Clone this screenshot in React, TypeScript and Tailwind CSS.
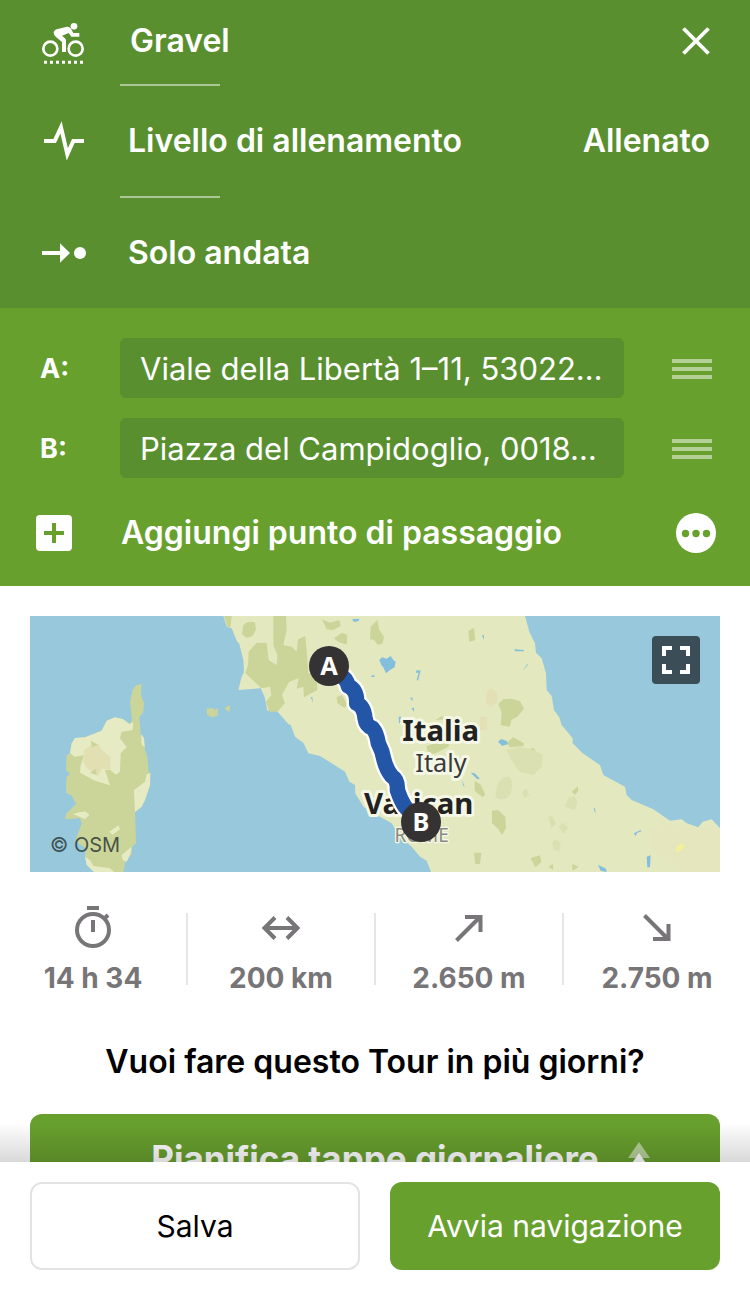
import type { ReactNode } from "react";

const waypoints = [
  { id: "A", value: "Viale della Libertà 1–11, 53022…" },
  { id: "B", value: "Piazza del Campidoglio, 0018…" },
];

function GravelIcon() {
  return (
    <svg viewBox="126 66 126 126" className="h-[42px] w-[42px]" fill="none" stroke="currentColor">
      <circle cx="151" cy="146" r="21" strokeWidth="8" />
      <circle cx="227" cy="146" r="21" strokeWidth="8" />
      <circle cx="222" cy="79" r="10" fill="currentColor" stroke="none" />
      <path
        d="M161 98 Q161 90 173 87 L201 80 Q209 79 213 86 L220 99 H238 V110 H214 L206 99 L186 107 L195 115 Q198 118 198 123 V156 H186 V126 L168 111 Q161 105 161 98 Z"
        fill="currentColor"
        stroke="none"
      />
      <path d="M132 187 H250" strokeWidth="9" strokeDasharray="9 9" />
    </svg>
  );
}

function PulseIcon() {
  return (
    <svg viewBox="132 358 120 126" className="h-[42px] w-10" fill="none" stroke="currentColor">
      <path d="M132 421 H164 L183 380 L202 461 L220 421 H252" strokeWidth="12" strokeMiterlimit="10" />
    </svg>
  );
}

function OneWayIcon() {
  return (
    <svg viewBox="126 727 132 60" className="h-5 w-11" fill="currentColor">
      <path d="M126 751 H180 V728 L210 757 L180 786 V763 H126 Z" />
      <circle cx="240" cy="757" r="18" />
    </svg>
  );
}

function CloseIcon() {
  return (
    <svg viewBox="0 0 28 28" className="h-7 w-7" fill="none" stroke="currentColor" strokeWidth="3.8">
      <path d="M1.5 1.5 L26.5 26.5 M26.5 1.5 L1.5 26.5" />
    </svg>
  );
}

function StopwatchIcon() {
  return (
    <svg viewBox="0 0 42 48" className="h-12 w-[42px]" fill="none" stroke="currentColor" strokeWidth="4">
      <circle cx="21" cy="26" r="16" />
      <path d="M15 4 H27 M21 16 V28 M32 15 L36 11" />
    </svg>
  );
}

function DistanceIcon() {
  return (
    <svg viewBox="0 0 40 24" className="h-6 w-10" fill="none" stroke="currentColor" strokeWidth="4">
      <path d="M3 12 H37 M14 1.5 L3.5 12 L14 22.5 M26 1.5 L36.5 12 L26 22.5" />
    </svg>
  );
}

function UphillIcon() {
  return (
    <svg viewBox="0 0 28 28" className="h-7 w-7" fill="none" stroke="currentColor" strokeWidth="4">
      <path d="M1.5 26.5 L25 3 M10 3 H25.5 V18" />
    </svg>
  );
}

function DownhillIcon() {
  return (
    <svg viewBox="0 0 28 28" className="h-7 w-7" fill="none" stroke="currentColor" strokeWidth="4">
      <path d="M1.5 1.5 L25 25 M25.5 10 V25 H10" />
    </svg>
  );
}

function PremiumIcon() {
  return (
    <svg viewBox="0 0 24 32" className="h-8 w-6" fill="currentColor">
      <path d="M12 0 L23 16 H1 Z" opacity="0.5" />
      <path d="M12 11 L23 27 H1 Z" />
    </svg>
  );
}

const waterMarks =
  "M1048 150 L1056 142 1070 146 1082 138 1090 150 1097 155 1094 172 1080 180 1068 190 1060 172 1054 165Z M966 28 L988 26 986 33 972 36Z M1020 200 l12 -6 2 7z M1160 210 l6 -22 -8 0 2 -8 12 2 -8 30z M1140 265 l7 -3 1 12z M1106 320 l7 0 0 18 -6 2z M842 260 l5 2 2 16z M1144 295 l8 -2 0 12z M1322 488 l12 2 16 16 -8 2z M1296 510 l8 20 -4 -2z M1356 76 h6 v14z M1452 118 l30 2 0 4 -26 0z M1478 182 l14 -20 2 2z M1404 395 l10 -8 16 6 4 10 -18 4z M1690 592 l6 6 0 14z M1812 670 l20 -10 2 4 -12 4 -6 10z M1850 740 l12 -4 -2 36 -8 0z M1704 764 l24 12 2 10 -18 -4z";

const forest =
  "M582 18 L605 18 602 50 592 52z M640 45 Q655 30 675 38 L678 58 668 78 650 84 636 72z M730 18 H768 L770 60 760 105 785 110 800 125 804 88 826 78 830 120 835 190 860 200 862 240 822 262 820 230 800 236 806 205 778 215 756 255 765 280 742 305 718 305 708 275 724 255 720 230 694 235 668 210 646 190 654 165 656 125 680 98 710 98 716 150 740 165 742 135 730 105z M876 28 L900 38 928 30 932 48 910 60 890 58z M912 85 L936 68 952 75 950 104 924 95z M1022 50 L1042 30 1048 60 1062 80 1058 100 1044 105 1032 90 1020 88z M1315 62 L1332 54 1336 90 1318 96z M920 262 l16 -8 14 28 -6 12 -22 -14z M1190 408 l34 -12 32 -10 0 24 -44 22 -20 -8z M1216 330 l20 -12 8 10z M1334 512 l18 12 14 30 -8 8 -24 -20z M1332 728 h22 l-4 34 -14 0z M1405 282 L1420 268 1445 266 1470 274 1482 296 1462 320 1444 330 1440 350 1412 346 1415 310z M1430 398 L1450 382 1482 400 1480 408 1440 412z M1386 602 l18 -2 22 20 2 34 -12 22 -12 -20 -18 -16z M1502 744 l28 -8 4 20 -18 16z M1625 545 l18 -16 2 14 -10 12z M1556 770 l12 -8 2 18z M1626 762 l20 8 -18 12z M1496 418 l14 -4 8 8z";

const paleHills =
  "M1430 420 L1470 410 1510 420 1538 434 1536 470 1510 496 1470 486 1446 454z M1400 530 Q1414 495 1438 500 Q1456 520 1438 558 Q1414 578 1396 560z M1604 590 l12 -28 18 -4 8 20 -8 22z M1554 622 l12 -6 12 26 -14 12z M1586 650 l12 -12 16 14 -12 20z M1566 698 l10 -10 16 10 -4 26 -16 -4z M1476 545 l12 -10 10 22 -16 8z";

const route =
  "M925 190 Q950 205 955 228 Q982 240 980 280 Q1002 290 1005 325 Q1008 348 1028 355 Q1040 368 1045 400 Q1058 425 1062 450 Q1070 480 1085 498 Q1104 510 1102 540 Q1112 570 1125 590 L1170 640";

function RouteMap() {
  return (
    <svg
      viewBox="0 18 2070 768"
      preserveAspectRatio="xMidYMid slice"
      className="block h-64 w-full bg-[#97c8dc]"
      role="img"
      aria-label="Mappa del percorso"
    >
      {/* mainland */}
      <path
        d="M580 18 L590 50 605 55 620 92 628 102 640 150 642 185 635 200 625 240 692 235 704 262 712 302 738 300 775 342 782 345 795 380 820 398 835 430 870 438 945 485 958 515 975 525 976 550 1000 590 1050 620 1085 640 1110 680 1145 710 1170 740 1190 752 1203 786 H2070 V655 L2045 628 2018 635 2005 652 1970 640 1955 628 1920 632 1870 598 1805 570 1790 555 1785 530 1720 495 1710 465 1658 430 1628 400 1628 385 1595 345 1588 322 1572 300 1565 258 1550 240 1548 190 1535 145 1518 128 1515 100 1498 65 1485 18 Z"
        fill="#e3e8bf"
      />
      <path d={forest} fill="#ccd599" />
      <path d={paleHills} fill="#dbe0b3" />
      <path d="M1368 250 l14 -16 20 14 0 26 -20 20 -14 -18z M1350 320 h20 v40 h-20z" fill="#e5dfb5" />
      <path d="M2070 660 L1990 656 1900 640 1860 660 1870 720 1950 786 H2070Z" fill="#e5e5be" />
      <path d="M1938 712 l14 -10 12 2 -2 10 -12 10 -10 2z" fill="#f3f09a" />
      <path d={waterMarks} fill="#83bfdd" />

      {/* Corsica and the small islands */}
      <path
        d="M318 226 L334 222 333 255 342 280 340 305 328 322 332 375 342 385 345 420 352 440 356 485 361 490 360 525 345 570 335 590 315 606 318 700 305 712 305 735 290 740 280 786 H192 L170 765 165 735 168 715 145 700 138 688 155 640 150 625 104 628 110 610 138 582 124 556 110 550 108 528 110 500 120 492 108 480 110 436 120 430 125 400 135 384 165 382 215 362 230 332 255 322 280 328 298 342 306 330 300 275 308 240Z"
        fill="#ccd599"
      />
      <path
        d="M120 430 L125 400 135 384 165 382 215 362 230 332 255 322 280 328 298 342 310 336 308 360 275 365 270 385 290 412 272 430 270 485 258 494 240 480 225 480 240 526 195 512 150 488 152 465 162 436 135 440Z M350 492 L361 490 360 525 345 570 335 590 315 606 312 540 345 515Z M130 612 L150 606 168 605 178 615 165 628 148 620Z M275 735 L305 710 300 735 290 755 278 750Z M165 740 L180 750 190 768 240 775 252 786 H192 L170 765Z M238 665 L265 646 270 658 248 674Z M334 372 L342 385 344 412 334 402Z"
        fill="#e6ebc3"
      />
      <path
        d="M163 420 L185 405 205 402 215 420 240 440 242 480 215 475 205 498 172 475 160 455Z"
        fill="#e2dfb2"
      />
      <path d="M182 392 l22 12 -18 8z M180 488 l18 -12 2 20z M225 480 l16 0 0 14z" fill="#ccd599" />
      <path d="M530 296 L546 294 556 300 564 294 562 318 545 322 531 314Z M584 294 L600 286 600 304 592 304Z" fill="#ccd599" />

      <g
        stroke="#f5f7e6"
        strokeWidth="18"
        strokeLinejoin="round"
        paintOrder="stroke"
        textAnchor="middle"
        fontFamily='"Noto Sans", sans-serif'
      >
        <text x="1232" y="392" fontSize="88" fontWeight="700" fill="#222">Italia</text>
        <text x="1233" y="487" fontSize="76" fill="#3a3a3a">Italy</text>
        <text x="1166" y="613" fontSize="88" fontWeight="700" fill="#222">Vatican</text>
        <text x="1175" y="695" fontSize="57" strokeWidth="8" fill="#888a80">ROME</text>
      </g>

      {/* planned route */}
      <g fill="none" strokeLinejoin="round" strokeLinecap="round">
        <path d={route} stroke="#fff" strokeWidth="60" />
        <path d={route} stroke="#2356a6" strokeWidth="46" />
      </g>

      <g textAnchor="middle" fontFamily='"Noto Sans", sans-serif' fontSize="76" fontWeight="700">
        <circle cx="897" cy="168" r="60" fill="#343233" />
        <text x="897" y="195" fill="#fff">A</text>
        <circle cx="1173" cy="636" r="60" fill="#343233" />
        <text x="1173" y="663" fill="#fff">B</text>
      </g>

      <text x="60" y="725" fontSize="60" fill="#2d3a36" fillOpacity="0.85" fontFamily="Inter, sans-serif">
        © OSM
      </text>
    </svg>
  );
}

function Stat({ icon, value }: { icon: ReactNode; value: string }) {
  return (
    <div className="flex flex-1 flex-col items-center gap-[10px]">
      <div className="flex h-12 items-center">{icon}</div>
      <p className="text-[28px] leading-8 font-bold whitespace-nowrap">{value}</p>
    </div>
  );
}

function StatDivider() {
  return <div className="h-[72px] w-0.5 bg-[#e6e5e7]" />;
}

export default function App() {
  return (
    <div className="flex h-screen flex-col bg-white font-[Inter,sans-serif] text-[32px] leading-10">
      <main className="min-h-0 flex-1 overflow-y-auto [scrollbar-width:none]">
        <section className="bg-[#598f2f] font-semibold text-white">
          <div className="flex h-[84px] items-center pr-10 pb-0.5">
            <div className="w-[130px] pt-1 pl-[42px]">
              <GravelIcon />
            </div>
            <p className="flex-1">Gravel</p>
            <button type="button" aria-label="Chiudi">
              <CloseIcon />
            </button>
          </div>
          <div className="ml-[120px] h-0.5 w-[100px] bg-white/50" />
          <div className="flex h-[110px] items-center pr-10">
            <div className="w-[128px] pl-11">
              <PulseIcon />
            </div>
            <p className="flex-1">Livello di allenamento</p>
            <p>Allenato</p>
          </div>
          <div className="ml-[120px] h-0.5 w-[100px] bg-white/50" />
          <div className="flex h-[110px] items-center pr-10">
            <div className="w-[128px] pl-[42px]">
              <OneWayIcon />
            </div>
            <p>Solo andata</p>
          </div>
        </section>

        <section className="bg-[#68a02e] pt-[30px] text-white">
          <div className="flex flex-col gap-5">
            {waypoints.map((point) => (
              <div key={point.id} className="flex items-center pr-[38px]">
                <label htmlFor={`waypoint-${point.id}`} className="w-[120px] pt-0.5 pl-10 text-[27px] font-bold">
                  {point.id}:
                </label>
                <input
                  id={`waypoint-${point.id}`}
                  type="text"
                  defaultValue={point.value}
                  className="h-[60px] min-w-0 flex-1 rounded-md bg-[#598f2f] px-5 text-[31px] outline-none"
                />
                <button type="button" aria-label="Sposta" className="ml-12 flex w-10 flex-col gap-1 pt-0.5">
                  <span className="h-1 w-full bg-white/50" />
                  <span className="h-1 w-full bg-white/50" />
                  <span className="h-1 w-full bg-white/50" />
                </button>
              </div>
            ))}
          </div>
          <div className="flex h-[108px] items-center pt-0.5 pr-[34px] pl-9">
            <button type="button" className="flex flex-1 items-center text-left font-semibold">
              <svg viewBox="0 0 36 36" className="mr-[49px] h-9 w-9">
                <rect width="36" height="36" rx="4" fill="#fff" />
                <path d="M8 18 H28 M18 8 V28" stroke="#68a02e" strokeWidth="4" />
              </svg>
              Aggiungi punto di passaggio
            </button>
            <button type="button" aria-label="Altre opzioni">
              <svg viewBox="0 0 40 40" className="h-10 w-10">
                <circle cx="20" cy="20" r="20" fill="#fff" />
                <g fill="#68a02e">
                  <circle cx="9.5" cy="20.5" r="3.7" />
                  <circle cx="20" cy="20.5" r="3.7" />
                  <circle cx="30.5" cy="20.5" r="3.7" />
                </g>
              </svg>
            </button>
          </div>
        </section>

        <section className="px-[30px] pt-[30px]">
          <div className="relative">
            <RouteMap />
            <button
              type="button"
              aria-label="Schermo intero"
              className="absolute top-5 right-5 flex h-12 w-12 items-center justify-center rounded bg-[#3b4e58] text-white"
            >
              <svg viewBox="0 0 28 28" className="h-7 w-7" fill="none" stroke="currentColor" strokeWidth="4">
                <path d="M2 10 V2 H10 M18 2 H26 V10 M26 18 V26 H18 M10 26 H2 V18" />
              </svg>
            </button>
          </div>
        </section>

        <section className="mt-8 flex items-center text-[#777577]">
          <Stat icon={<StopwatchIcon />} value="14 h 34" />
          <StatDivider />
          <Stat icon={<DistanceIcon />} value="200 km" />
          <StatDivider />
          <Stat icon={<UphillIcon />} value="2.650 m" />
          <StatDivider />
          <Stat icon={<DownhillIcon />} value="2.750 m" />
        </section>

        <section className="px-[30px] pb-10">
          <h2 className="mt-12 text-center font-semibold text-black">Vuoi fare questo Tour in più giorni?</h2>
          <button
            type="button"
            className="mt-8 grid h-[88px] w-full grid-cols-[1fr_auto_1fr] items-center rounded-xl bg-[#68a02e] text-[35px] font-bold text-white"
          >
            <span className="col-start-2">Pianifica tappe giornaliere</span>
            <span className="pl-7">
              <PremiumIcon />
            </span>
          </button>
        </section>
      </main>

      <footer className="relative grid grid-cols-2 gap-[30px] bg-white px-[30px] py-5 text-[30px]">
        <div className="pointer-events-none absolute inset-x-0 bottom-full h-10 bg-linear-to-t from-black/15 to-transparent" />
        <button type="button" className="h-[88px] rounded-xl border-2 border-[#e3e2e5] text-black">
          Salva
        </button>
        <button type="button" className="h-[88px] rounded-xl bg-[#68a02e] text-white">
          Avvia navigazione
        </button>
      </footer>
    </div>
  );
}
